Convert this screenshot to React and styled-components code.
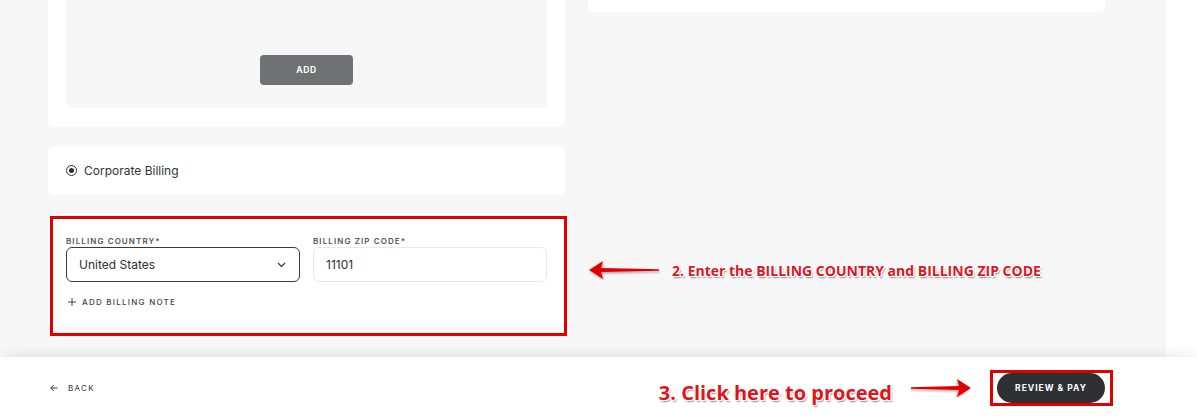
import React from "react";
import styled, { createGlobalStyle } from "styled-components";

const Global = createGlobalStyle`
  html, body { margin: 0; padding: 0; background: #fff; }
  body { font-family: Inter, "Noto Sans", "Liberation Sans", sans-serif; color: #2f3033; }
  * { box-sizing: border-box; }
`;

const Page = styled.div`
  width: 1197px;
  height: 419px;
  display: flex;
  flex-direction: column;
  overflow: hidden;
`;

const Main = styled.div`
  width: 1166px;
  height: 357px;
  flex-shrink: 0;
  background: #f7f7f7;
  display: flex;
  gap: 23px;
  padding-left: 48px;
  overflow: hidden;
`;

const LeftCol = styled.div`
  width: 517px;
  align-self: flex-end;
  padding-bottom: 30px;
  display: flex;
  flex-direction: column;
  gap: 19px;
`;

const RightCol = styled.div`
  width: 517px;
  align-self: flex-start;
  display: flex;
  flex-direction: column;
`;

const Card = styled.div`
  position: relative;
  background: #fff;
  border-radius: 6px;
  padding: ${(p) => p.$pad || "0 18px"};
`;

const TopCard = styled(Card)`
  height: 60px;
  margin-top: -48px;
`;

const InnerBox = styled.div`
  background: #f7f7f7;
  border-radius: 6px;
  padding: 120px 0 23px;
  display: flex;
  justify-content: center;
`;

const GreyButton = styled.button`
  width: 93px;
  height: 30px;
  border: none;
  border-radius: 4px;
  background: #707175;
  color: #fff;
  font-family: inherit;
  font-size: 8.5px;
  font-weight: 700;
  letter-spacing: 0.6px;
`;

const RadioRow = styled.div`
  height: 49px;
  display: flex;
  align-items: center;
  gap: 7px;
  font-size: 12px;
  color: #333;
`;

const Radio = styled.span`
  width: 11px;
  height: 11px;
  border-radius: 50%;
  border: 1.5px solid #2f3033;
  display: flex;
  align-items: center;
  justify-content: center;
  &::after {
    content: "";
    width: 5px;
    height: 5px;
    border-radius: 50%;
    background: #2f3033;
  }
`;

const Fields = styled.div`
  display: grid;
  grid-template-columns: 234px 234px;
  gap: 13px;
`;

const Field = styled.div`
  display: flex;
  flex-direction: column;
  gap: 1px;
`;

const Label = styled.div`
  font-size: 8px;
  line-height: 10px;
  font-weight: 600;
  letter-spacing: 1.1px;
  color: #555;
`;

const InputBox = styled.div`
  height: 35px;
  border: 1px solid ${(p) => (p.$active ? "#3a3a3a" : "#e8e8e8")};
  border-radius: 6px;
  padding: 0 13px 0 12px;
  display: flex;
  align-items: center;
  justify-content: space-between;
  font-size: 12px;
  color: #2f3033;
`;

const NoteLink = styled.div`
  margin-top: 15px;
  display: flex;
  align-items: center;
  gap: 6px;
  font-size: 8px;
  line-height: 10px;
  font-weight: 500;
  letter-spacing: 1.25px;
  color: #444;
  padding-left: 2px;
`;

const Highlight = styled.div`
  position: absolute;
  top: 2px;
  left: 2px;
  right: -2px;
  bottom: -9px;
  border: 3px solid #e00000;
  pointer-events: none;
`;

const Annotation = styled.div`
  display: flex;
  align-items: center;
  gap: ${(p) => p.$gap || "12px"};
  margin-top: ${(p) => p.$top || "0"};
`;

const Callout = styled.span`
  font-family: "Open Sans", "Noto Sans", sans-serif;
  font-weight: 700;
  font-size: ${(p) => p.$size || "13px"};
  margin-top: ${(p) => p.$drop || "0"};
  color: #e0141e;
  white-space: nowrap;
  text-shadow: 1px 0 0 #fff, -1px 0 0 #fff, 0 1px 0 #fff, 0 -1px 0 #fff,
    1px 1px 0 #fff, -1px -1px 0 #fff, 1px -1px 0 #fff, -1px 1px 0 #fff,
    1.5px 1.5px 1.5px rgba(0, 0, 0, 0.45);
`;

const Footer = styled.div`
  height: 62px;
  background: #fff;
  position: relative;
  box-shadow: 0 -5px 14px -4px rgba(0, 0, 0, 0.1);
  display: flex;
  align-items: center;
  justify-content: space-between;
  padding: 0 84px 0 50px;
`;

const Back = styled.div`
  display: flex;
  align-items: center;
  gap: 10px;
  font-size: 8px;
  letter-spacing: 1.3px;
  color: #333;
`;

const RedFrame = styled.div`
  border: 3px solid #e00000;
  padding: 0 5px 0 4px;
  display: flex;
  align-items: center;
`;

const DarkButton = styled.button`
  width: 108px;
  height: 30px;
  border: none;
  border-radius: 15px;
  background: #2f3033;
  color: #fff;
  font-family: inherit;
  font-size: 8.5px;
  font-weight: 700;
  letter-spacing: 1px;
`;

const RedArrow = ({ dir = "left", width = 72 }) => (
  <svg width={width} height="20" viewBox={`0 0 ${width} 20`}>
    <defs>
      <filter id={`sh-${dir}`} x="-10%" y="-30%" width="130%" height="180%">
        <feDropShadow dx="1" dy="1.5" stdDeviation="0.8" floodColor="#000" floodOpacity="0.35" />
      </filter>
    </defs>
    <g filter={`url(#sh-${dir})`} transform={dir === "right" ? `translate(${width} 0) scale(-1 1)` : undefined}>
      <path
        d={`M1 10 L15 1 L13 8 L${width - 1} 9.2 L${width - 1} 10.8 L13 12 L15 19 Z`}
        fill="#e00000"
      />
    </g>
  </svg>
);

const App = () => (
  <>
    <Global />
    <Page>
      <Main>
        <LeftCol>
          <Card $pad="0 18px 19px">
            <InnerBox>
              <GreyButton>ADD</GreyButton>
            </InnerBox>
          </Card>
          <Card>
            <RadioRow>
              <Radio />
              Corporate Billing
            </RadioRow>
          </Card>
          <Card $pad="22px 18px 20px">
            <Fields>
              <Field>
                <Label>BILLING COUNTRY*</Label>
                <InputBox $active>
                  United States
                  <svg width="9" height="6" viewBox="0 0 9 6">
                    <path d="M1 1 L4.5 4.5 L8 1" fill="none" stroke="#333" strokeWidth="1.2" />
                  </svg>
                </InputBox>
              </Field>
              <Field>
                <Label>BILLING ZIP CODE*</Label>
                <InputBox>11101</InputBox>
              </Field>
            </Fields>
            <NoteLink>
              <svg width="8" height="8" viewBox="0 0 8 8">
                <path d="M4 0 V8 M0 4 H8" stroke="#444" strokeWidth="1" />
              </svg>
              ADD BILLING NOTE
            </NoteLink>
            <Highlight />
          </Card>
        </LeftCol>
        <RightCol>
          <TopCard />
          <Annotation $top="248px" $gap="12px">
            <RedArrow dir="left" width={72} />
            <Callout $size="14px">2. Enter the BILLING COUNTRY and BILLING ZIP CODE</Callout>
          </Annotation>
        </RightCol>
      </Main>
      <Footer>
        <Back>
          <svg width="8" height="8" viewBox="0 0 8 8">
            <path d="M7.5 4 H0.8 M3.8 1 L0.8 4 L3.8 7" fill="none" stroke="#333" strokeWidth="1" />
          </svg>
          BACK
        </Back>
        <Annotation $gap="18px">
          <Callout $size="20px" $drop="8px">3. Click here to proceed</Callout>
          <RedArrow dir="right" width={62} />
          <RedFrame>
            <DarkButton>REVIEW &amp; PAY</DarkButton>
          </RedFrame>
        </Annotation>
      </Footer>
    </Page>
  </>
);

export default App;
